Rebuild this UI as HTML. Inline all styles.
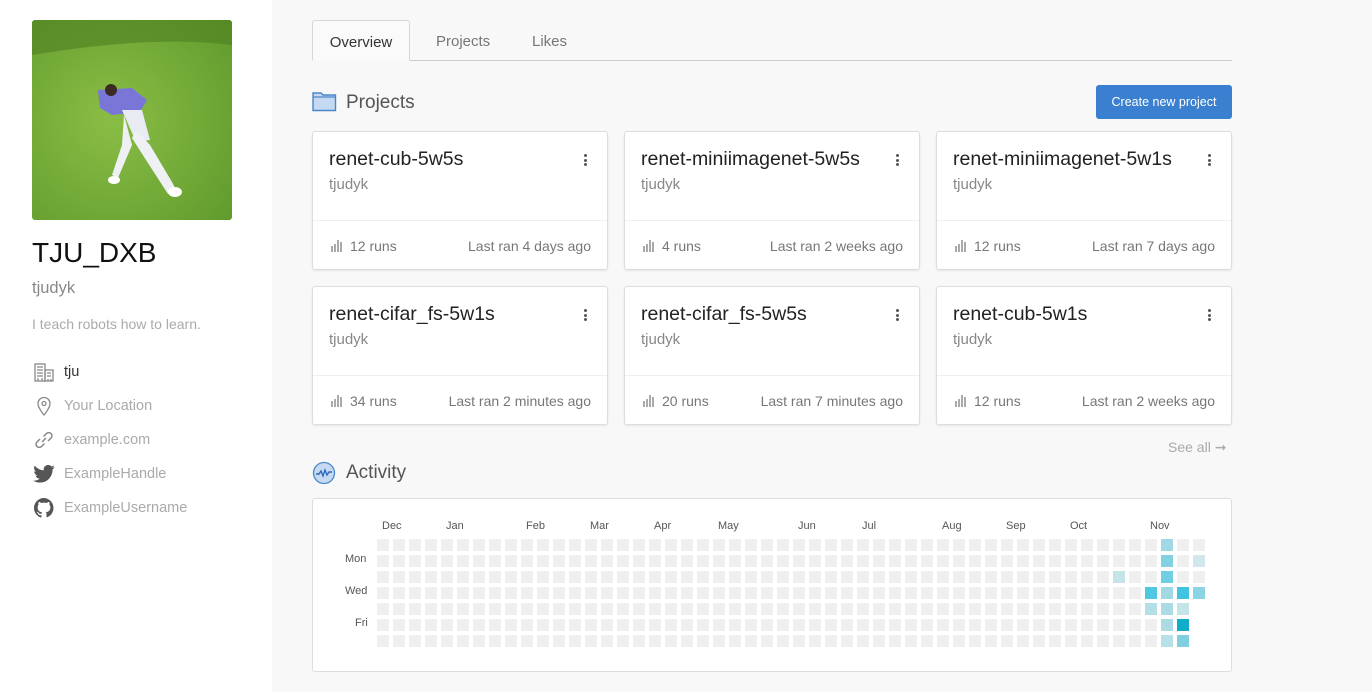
<!DOCTYPE html>
<html><head><meta charset="utf-8"><style>
*{box-sizing:border-box;margin:0;padding:0}
body{width:1372px;height:692px;overflow:hidden;background:#f8f8f8;font-family:"Liberation Sans",sans-serif;position:relative;color:#333}
.side{position:absolute;left:0;top:0;width:272px;height:692px;background:#fff}
.photo{position:absolute;left:32px;top:20px;width:200px;height:200px;border-radius:3px;overflow:hidden}
.abs{position:absolute;white-space:nowrap}
.tab{position:absolute;top:20px;height:41px;font-size:15px;color:#777;line-height:43px}
.card{position:absolute;width:296px;height:139px;background:#fff;border:1px solid #ddd;border-radius:3px;box-shadow:0 1px 2px rgba(0,0,0,.08)}
.card .t{position:absolute;left:16px;top:16px;font-size:19.5px;color:#222}
.card .u{position:absolute;left:16px;top:44px;font-size:15px;color:#888}
.card .dots{position:absolute;right:20px;top:22px;width:3px}
.card .dots i{display:block;width:3px;height:3px;background:#555;border-radius:50%;margin-bottom:1.5px}
.card hr{position:absolute;left:0;right:0;top:88px;border:0;border-top:1px solid #eee}
.card .r{position:absolute;left:18px;top:106px;font-size:14px;color:#777}
.card .l{position:absolute;right:16px;top:106px;font-size:14px;color:#777}
.bars{display:inline-block;width:12px;height:12px;vertical-align:-1px;margin-right:7px;position:relative}
.bars b{position:absolute;bottom:0;width:2px;background:#aaa}
.cell{position:absolute;width:12px;height:12px;background:#efefef}
.ml{position:absolute;top:520px;font-size:11px;color:#555}
.dl{position:absolute;left:345px;font-size:11px;color:#555}
.side .row{position:absolute;left:64px;font-size:14.5px;color:#aaa}
</style></head><body>
<div class="side">
 <div class="photo">
  <svg width="200" height="200" viewBox="0 0 200 200">
   <defs><radialGradient id="gr" cx=".4" cy=".5" r=".8"><stop offset="0" stop-color="#8abd45"/><stop offset="1" stop-color="#5f9a2c"/></radialGradient></defs>
   <rect width="200" height="200" fill="url(#gr)"/>
   <path d="M0 0H200V25Q120 15 0 35Z" fill="#4e7e22" opacity=".6"/>
   <path d="M66 70 L100 68 L115 80 L108 92 L80 95 L68 88Z" fill="#7a76d8"/>
   <circle cx="79" cy="70" r="6" fill="#3b2a22"/>
   <path d="M90 90 L110 90 L118 120 L104 122Z" fill="#e8ecf2"/>
   <path d="M92 95 L100 125 L86 158 L80 155 L90 125Z" fill="#eef0f4"/>
   <path d="M104 110 L118 125 L140 162 L145 172 L136 174 L114 140 L100 118Z" fill="#eef0f4"/>
   <ellipse cx="82" cy="160" rx="6" ry="4" fill="#fff"/>
   <ellipse cx="143" cy="172" rx="7" ry="5" fill="#fff"/>
  </svg>
 </div>
 <div class="abs" style="left:32px;top:237px;font-size:28px;color:#111">TJU_DXB</div>
 <div class="abs" style="left:32px;top:279px;font-size:16.5px;color:#888">tjudyk</div>
 <div class="abs" style="left:32px;top:316px;font-size:14px;color:#aaa">I teach robots how to learn.</div>
 <svg class="abs" style="left:34px;top:362px" width="20" height="20" viewBox="0 0 20 20" fill="none" stroke="#888" stroke-width="1.3"><rect x="1" y="2" width="10" height="17"/><rect x="11" y="8" width="8" height="11"/><path d="M3 5h6M3 8h6M3 11h6M3 14h6M13 11h4M13 14h4M4 19v-3M8 19v-3M14 19v-2M17 19v-2"/></svg>
 <div class="row" style="top:364px;color:#333">tju</div>
 <svg class="abs" style="left:35px;top:396px" width="18" height="20" viewBox="0 0 18 20" fill="none" stroke="#888" stroke-width="1.3"><path d="M9 19C9 19 3 12 3 7.5A6 6 0 0 1 15 7.5C15 12 9 19 9 19Z"/><circle cx="9" cy="7.5" r="2"/></svg>
 <div class="row" style="top:398px">Your Location</div>
 <svg class="abs" style="left:33px;top:429px" width="22" height="22" viewBox="0 0 22 22" fill="none" stroke="#888" stroke-width="1.5"><path d="M9 13l4-4M7 10l-3 3a3 3 0 0 0 4.5 4.5l3-3M15 12l3-3a3 3 0 0 0-4.5-4.5l-3 3"/></svg>
 <div class="row" style="top:432px">example.com</div>
 <svg class="abs" style="left:33px;top:465px" width="22" height="18" viewBox="0 0 24 20"><path fill="#555" d="M24 2.4a10 10 0 0 1-2.8.8A5 5 0 0 0 23.3.4a10 10 0 0 1-3.1 1.2A4.9 4.9 0 0 0 11.8 6 14 14 0 0 1 1.7.9a4.9 4.9 0 0 0 1.5 6.6A4.9 4.9 0 0 1 1 6.9a4.9 4.9 0 0 0 3.9 4.8 5 5 0 0 1-2.2.1 4.9 4.9 0 0 0 4.6 3.4A9.9 9.9 0 0 1 0 17.3 14 14 0 0 0 7.5 19.5c9 0 14-7.5 14-14v-.6A10 10 0 0 0 24 2.4Z"/></svg>
 <div class="row" style="top:466px">ExampleHandle</div>
 <svg class="abs" style="left:34px;top:498px" width="20" height="20" viewBox="0 0 16 16"><path fill="#555" d="M8 0a8 8 0 0 0-2.5 15.6c.4 0 .5-.2.5-.4v-1.5c-2.2.5-2.7-1-2.7-1-.4-.9-.9-1.2-.9-1.2-.7-.5.1-.5.1-.5.8.1 1.2.8 1.2.8.7 1.300 1.9.9 2.3.7.1-.5.3-.9.5-1.1-1.8-.2-3.6-.9-3.6-4 0-.9.3-1.6.8-2.1-.1-.2-.4-1 .1-2.1 0 0 .7-.2 2.2.8a7.5 7.5 0 0 1 4 0c1.5-1 2.2-.8 2.2-.8.4 1.1.2 1.9.1 2.1.5.6.8 1.3.8 2.1 0 3.1-1.9 3.7-3.6 3.9.3.3.5.8.5 1.5v2.2c0 .2.1.5.6.4A8 8 0 0 0 8 0Z"/></svg>
 <div class="row" style="top:500px">ExampleUsername</div>
</div>

<div class="abs" style="left:312px;top:60px;width:920px;border-top:1px solid #ccc"></div>
<div class="tab" style="left:312px;width:98px;background:#fafafa;border:1px solid #d6d6d6;border-bottom:1px solid #fafafa;border-radius:3px 3px 0 0;color:#333;text-align:center">Overview</div>
<div class="tab" style="left:436px">Projects</div>
<div class="tab" style="left:532px">Likes</div>

<svg class="abs" style="left:312px;top:91px" width="25" height="21" viewBox="0 0 25 21"><path d="M1 2h8l2 2h12.5v15.5H1Z" fill="#c5daf2" stroke="#4a86c8" stroke-width="1.4"/><path d="M1 6h22.5" stroke="#4a86c8" stroke-width="1.2"/></svg>
<div class="abs" style="left:346px;top:92px;font-size:19px;color:#555">Projects</div>
<div class="abs" style="left:1096px;top:85px;width:136px;height:34px;background:#3a7fd0;border-radius:3px;color:#fff;font-size:12.5px;line-height:35px;text-align:center">Create new project</div>

<div class="card" style="left:312px;top:131px"><div class="t">renet-cub-5w5s</div><div class="u">tjudyk</div><div class="dots"><i></i><i></i><i></i></div><hr><div class="r"><span class="bars"><b style="left:0;height:6px"></b><b style="left:3px;height:8px"></b><b style="left:6px;height:12px"></b><b style="left:9px;height:10px"></b></span>12 runs</div><div class="l">Last ran 4 days ago</div></div>
<div class="card" style="left:624px;top:131px"><div class="t">renet-miniimagenet-5w5s</div><div class="u">tjudyk</div><div class="dots"><i></i><i></i><i></i></div><hr><div class="r"><span class="bars"><b style="left:0;height:6px"></b><b style="left:3px;height:8px"></b><b style="left:6px;height:12px"></b><b style="left:9px;height:10px"></b></span>4 runs</div><div class="l">Last ran 2 weeks ago</div></div>
<div class="card" style="left:936px;top:131px"><div class="t">renet-miniimagenet-5w1s</div><div class="u">tjudyk</div><div class="dots"><i></i><i></i><i></i></div><hr><div class="r"><span class="bars"><b style="left:0;height:6px"></b><b style="left:3px;height:8px"></b><b style="left:6px;height:12px"></b><b style="left:9px;height:10px"></b></span>12 runs</div><div class="l">Last ran 7 days ago</div></div>
<div class="card" style="left:312px;top:286px"><div class="t">renet-cifar_fs-5w1s</div><div class="u">tjudyk</div><div class="dots"><i></i><i></i><i></i></div><hr><div class="r"><span class="bars"><b style="left:0;height:6px"></b><b style="left:3px;height:8px"></b><b style="left:6px;height:12px"></b><b style="left:9px;height:10px"></b></span>34 runs</div><div class="l">Last ran 2 minutes ago</div></div>
<div class="card" style="left:624px;top:286px"><div class="t">renet-cifar_fs-5w5s</div><div class="u">tjudyk</div><div class="dots"><i></i><i></i><i></i></div><hr><div class="r"><span class="bars"><b style="left:0;height:6px"></b><b style="left:3px;height:8px"></b><b style="left:6px;height:12px"></b><b style="left:9px;height:10px"></b></span>20 runs</div><div class="l">Last ran 7 minutes ago</div></div>
<div class="card" style="left:936px;top:286px"><div class="t">renet-cub-5w1s</div><div class="u">tjudyk</div><div class="dots"><i></i><i></i><i></i></div><hr><div class="r"><span class="bars"><b style="left:0;height:6px"></b><b style="left:3px;height:8px"></b><b style="left:6px;height:12px"></b><b style="left:9px;height:10px"></b></span>12 runs</div><div class="l">Last ran 2 weeks ago</div></div>

<div class="abs" style="left:1168px;top:439px;font-size:14px;color:#aaa">See all ➞</div>

<svg class="abs" style="left:312px;top:461px" width="24" height="24" viewBox="0 0 24 24"><circle cx="12" cy="12" r="10.5" fill="#c5daf2" stroke="#4a86c8" stroke-width="1.3"/><path d="M4 13h3l2-3 2 5 2-6 2 5 2-3h3" fill="none" stroke="#2a6ab8" stroke-width="1.4"/></svg>
<div class="abs" style="left:346px;top:462px;font-size:19px;color:#555">Activity</div>

<div class="abs" style="left:312px;top:498px;width:920px;height:174px;background:#fff;border:1px solid #ddd;border-radius:3px"></div>
<div class="ml" style="left:382px">Dec</div><div class="ml" style="left:446px">Jan</div><div class="ml" style="left:526px">Feb</div><div class="ml" style="left:590px">Mar</div><div class="ml" style="left:654px">Apr</div><div class="ml" style="left:718px">May</div><div class="ml" style="left:798px">Jun</div><div class="ml" style="left:862px">Jul</div><div class="ml" style="left:942px">Aug</div><div class="ml" style="left:1006px">Sep</div><div class="ml" style="left:1070px">Oct</div><div class="ml" style="left:1150px">Nov</div>
<div class="dl" style="top:553px">Mon</div><div class="dl" style="top:585px">Wed</div><div class="dl" style="left:355px;top:617px">Fri</div>
<div id="g"></div>
<script>
var c={"46,2":"#c4e4e8","48,3":"#50c8e0","48,4":"#b4dfe6","49,0":"#a0d8e4","49,1":"#82d0e0","49,2":"#70cfe0","49,3":"#a0d8e4","49,4":"#acdbe6","49,5":"#acdbe6","49,6":"#b8e0e8","50,3":"#40c4e0","50,4":"#c4e4e8","50,5":"#10acc8","50,6":"#80d0e0","51,1":"#d0e8ec","51,3":"#8cd4e4"};
var h="";for(var x=0;x<52;x++)for(var y=0;y<7;y++){if(x==51&&y>3)continue;var k=x+","+y;h+='<div class="cell" style="left:'+(377+x*16)+'px;top:'+(539+y*16)+'px'+(c[k]?';background:'+c[k]:'')+'"></div>';}
document.getElementById("g").innerHTML=h;
</script>
</body></html>
